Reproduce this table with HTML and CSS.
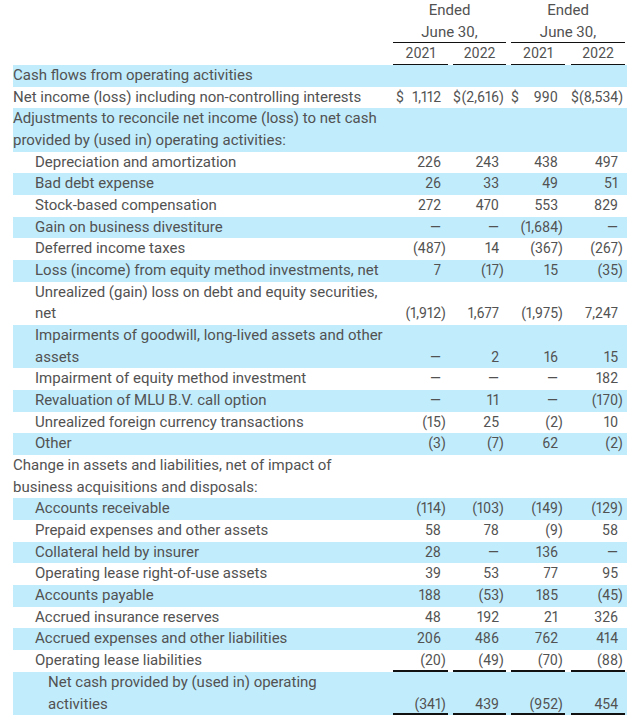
FILE: index.html
```html
<!DOCTYPE html>
<html lang="en">
<head>
<meta charset="utf-8">
<title>Cash flows from operating activities</title>
<link rel="stylesheet" href="styles.css">
</head>
<body>
<table class="cf">
  <colgroup>
    <col class="c-label"><col class="c-n1"><col class="c-g1"><col class="c-n2"><col class="c-g2"><col class="c-n3"><col class="c-g3"><col class="c-n4"><col class="c-end">
  </colgroup>
  <thead>
    <tr><td></td><td colspan="3" class="hc">Ended</td><td></td><td colspan="3" class="hc">Ended</td><td></td></tr>
    <tr><td></td><td colspan="3" class="hc ul">June 30,</td><td></td><td colspan="3" class="hc ul">June 30,</td><td></td></tr>
    <tr><td></td><td class="hc yr ul">2021</td><td></td><td class="hc yr ul">2022</td><td></td><td class="hc yr ul">2021</td><td></td><td class="hc yr ul">2022</td><td></td></tr>
  </thead>
  <tbody>
    <tr class="b"><td>Cash flows from operating activities</td><td></td><td></td><td></td><td></td><td></td><td></td><td></td><td></td></tr>
    <tr><td>Net income (loss) including non-controlling interests</td>
      <td class="n"><span class="cur first">$</span>1,112<span class="p"></span></td><td></td>
      <td class="n"><span class="cur">$</span>(2,616<span class="p">)</span></td><td></td>
      <td class="n"><span class="cur">$</span>990<span class="p"></span></td><td></td>
      <td class="n"><span class="cur">$</span>(8,534<span class="p">)</span></td><td></td></tr>
    <tr class="b"><td>Adjustments to reconcile net income (loss) to net cash<br>provided by (used in) operating activities:</td><td></td><td></td><td></td><td></td><td></td><td></td><td></td><td></td></tr>
    <tr><td class="i1">Depreciation and amortization</td><td class="n">226<span class="p"></span></td><td></td><td class="n">243<span class="p"></span></td><td></td><td class="n">438<span class="p"></span></td><td></td><td class="n">497<span class="p"></span></td><td></td></tr>
    <tr class="b"><td class="i1">Bad debt expense</td><td class="n">26<span class="p"></span></td><td></td><td class="n">33<span class="p"></span></td><td></td><td class="n">49<span class="p"></span></td><td></td><td class="n">51<span class="p"></span></td><td></td></tr>
    <tr><td class="i1">Stock-based compensation</td><td class="n">272<span class="p"></span></td><td></td><td class="n">470<span class="p"></span></td><td></td><td class="n">553<span class="p"></span></td><td></td><td class="n">829<span class="p"></span></td><td></td></tr>
    <tr class="b"><td class="i1">Gain on business divestiture</td><td class="n">—<span class="p"></span></td><td></td><td class="n">—<span class="p"></span></td><td></td><td class="n">(1,684<span class="p">)</span></td><td></td><td class="n">—<span class="p"></span></td><td></td></tr>
    <tr><td class="i1">Deferred income taxes</td><td class="n">(487<span class="p">)</span></td><td></td><td class="n">14<span class="p"></span></td><td></td><td class="n">(367<span class="p">)</span></td><td></td><td class="n">(267<span class="p">)</span></td><td></td></tr>
    <tr class="b"><td class="i1">Loss (income) from equity method investments, net</td><td class="n">7<span class="p"></span></td><td></td><td class="n">(17<span class="p">)</span></td><td></td><td class="n">15<span class="p"></span></td><td></td><td class="n">(35<span class="p">)</span></td><td></td></tr>
    <tr><td class="i1">Unrealized (gain) loss on debt and equity securities,<br>net</td><td class="n">(1,912<span class="p">)</span></td><td></td><td class="n">1,677<span class="p"></span></td><td></td><td class="n">(1,975<span class="p">)</span></td><td></td><td class="n">7,247<span class="p"></span></td><td></td></tr>
    <tr class="b"><td class="i1">Impairments of goodwill, long-lived assets and other<br>assets</td><td class="n">—<span class="p"></span></td><td></td><td class="n">2<span class="p"></span></td><td></td><td class="n">16<span class="p"></span></td><td></td><td class="n">15<span class="p"></span></td><td></td></tr>
    <tr><td class="i1">Impairment of equity method investment</td><td class="n">—<span class="p"></span></td><td></td><td class="n">—<span class="p"></span></td><td></td><td class="n">—<span class="p"></span></td><td></td><td class="n">182<span class="p"></span></td><td></td></tr>
    <tr class="b"><td class="i1">Revaluation of MLU B.V. call option</td><td class="n">—<span class="p"></span></td><td></td><td class="n">11<span class="p"></span></td><td></td><td class="n">—<span class="p"></span></td><td></td><td class="n">(170<span class="p">)</span></td><td></td></tr>
    <tr><td class="i1">Unrealized foreign currency transactions</td><td class="n">(15<span class="p">)</span></td><td></td><td class="n">25<span class="p"></span></td><td></td><td class="n">(2<span class="p">)</span></td><td></td><td class="n">10<span class="p"></span></td><td></td></tr>
    <tr class="b"><td class="i1">Other</td><td class="n">(3<span class="p">)</span></td><td></td><td class="n">(7<span class="p">)</span></td><td></td><td class="n">62<span class="p"></span></td><td></td><td class="n">(2<span class="p">)</span></td><td></td></tr>
    <tr><td>Change in assets and liabilities, net of impact of<br>business acquisitions and disposals:</td><td></td><td></td><td></td><td></td><td></td><td></td><td></td><td></td></tr>
    <tr class="b"><td class="i1">Accounts receivable</td><td class="n">(114<span class="p">)</span></td><td></td><td class="n">(103<span class="p">)</span></td><td></td><td class="n">(149<span class="p">)</span></td><td></td><td class="n">(129<span class="p">)</span></td><td></td></tr>
    <tr><td class="i1">Prepaid expenses and other assets</td><td class="n">58<span class="p"></span></td><td></td><td class="n">78<span class="p"></span></td><td></td><td class="n">(9<span class="p">)</span></td><td></td><td class="n">58<span class="p"></span></td><td></td></tr>
    <tr class="b"><td class="i1">Collateral held by insurer</td><td class="n">28<span class="p"></span></td><td></td><td class="n">—<span class="p"></span></td><td></td><td class="n">136<span class="p"></span></td><td></td><td class="n">—<span class="p"></span></td><td></td></tr>
    <tr><td class="i1">Operating lease right-of-use assets</td><td class="n">39<span class="p"></span></td><td></td><td class="n">53<span class="p"></span></td><td></td><td class="n">77<span class="p"></span></td><td></td><td class="n">95<span class="p"></span></td><td></td></tr>
    <tr class="b"><td class="i1">Accounts payable</td><td class="n">188<span class="p"></span></td><td></td><td class="n">(53<span class="p">)</span></td><td></td><td class="n">185<span class="p"></span></td><td></td><td class="n">(45<span class="p">)</span></td><td></td></tr>
    <tr><td class="i1">Accrued insurance reserves</td><td class="n">48<span class="p"></span></td><td></td><td class="n">192<span class="p"></span></td><td></td><td class="n">21<span class="p"></span></td><td></td><td class="n">326<span class="p"></span></td><td></td></tr>
    <tr class="b"><td class="i1">Accrued expenses and other liabilities</td><td class="n">206<span class="p"></span></td><td></td><td class="n">486<span class="p"></span></td><td></td><td class="n">762<span class="p"></span></td><td></td><td class="n">414<span class="p"></span></td><td></td></tr>
    <tr><td class="i1">Operating lease liabilities</td><td class="n ul2">(20<span class="p">)</span></td><td></td><td class="n ul2">(49<span class="p">)</span></td><td></td><td class="n ul2">(70<span class="p">)</span></td><td></td><td class="n ul2">(88<span class="p">)</span></td><td></td></tr>
    <tr class="b"><td class="i2">Net cash provided by (used in) operating<br>activities</td><td class="n ul2">(341<span class="p">)</span></td><td></td><td class="n ul2">439<span class="p"></span></td><td></td><td class="n ul2">(952<span class="p">)</span></td><td></td><td class="n ul2">454<span class="p"></span></td><td></td></tr>
  </tbody>
</table>
</body>
</html>
```
FILE: styles.css
```css
html, body {
  margin: 0;
  padding: 0;
  background: #ffffff;
}

body {
  font-family: Roboto, "Liberation Sans", sans-serif;
  font-size: 15px;
  color: #525252;
}

.cf {
  border-collapse: collapse;
  table-layout: fixed;
  width: 614px;
  margin-left: 13px;
}

.c-label { width: 380px; }
.c-n1 { width: 55px; }
.c-g1 { width: 5px; }
.c-n2 { width: 53px; }
.c-g2 { width: 5px; }
.c-n3 { width: 54px; }
.c-g3 { width: 6px; }
.c-n4 { width: 54px; }
.c-end { width: 2px; }

.cf td {
  padding: 0;
  line-height: 21.67px;
  vertical-align: bottom;
  white-space: nowrap;
}

.cf .b td {
  background: #c1ecfc;
}

.hc {
  text-align: center;
}

.yr,
.n {
  font-size: 14px;
  font-variant-numeric: proportional-nums;
}

.ul {
  box-shadow: inset 0 -1px 0 #111111;
}

.ul2 {
  box-shadow: inset 0 -2px 0 #111111;
}

.cf td.i1 { padding-left: 22px; }
.cf td.i2 { padding-left: 35px; }

.n {
  text-align: right;
}

.cur {
  float: left;
}

.cur.first {
  margin-left: 3px;
}

.p {
  display: inline-block;
  width: 7px;
  text-align: left;
}
```
